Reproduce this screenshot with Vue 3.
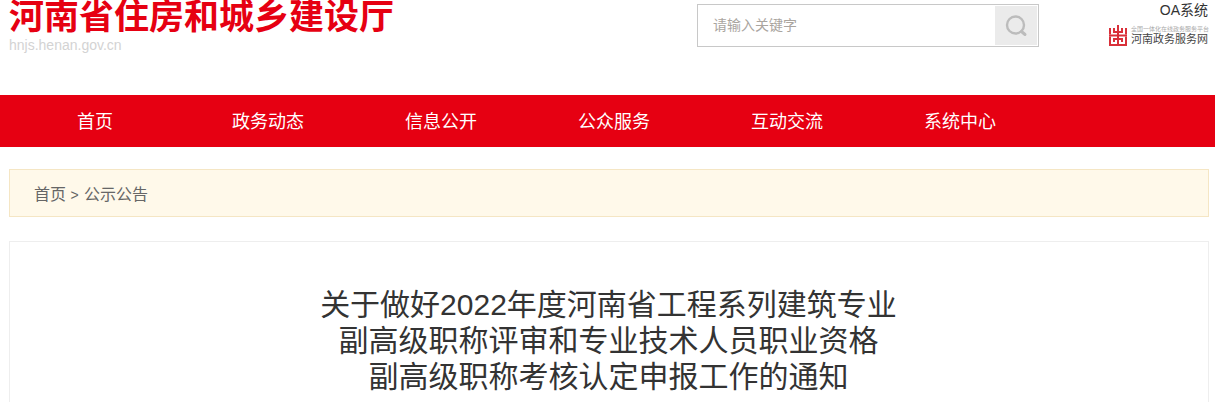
<template>
  <div class="page">
    <header class="header">
      <div class="brand">
        <h1 class="site-name">河南省住房和城乡建设厅</h1>
        <div class="site-url">hnjs.henan.gov.cn</div>
      </div>
      <div class="search">
        <span class="search-hint">请输入关键字</span>
        <button class="search-btn">
          <svg width="24" height="24" viewBox="0 0 24 24" fill="none" stroke="#bcbcbc">
            <circle cx="11.500" cy="11" r="8.500" stroke-width="2.400" />
            <path d="M17.500 17.500l3.500 3" stroke-width="3" stroke-linecap="round" />
          </svg>
        </button>
      </div>
      <div class="links">
        <a class="oa">OA系统</a>
        <div class="gov">
          <svg class="gov-logo" width="18" height="21" viewBox="0 0 18 21" fill="#d9303a">
            <path d="M8 0h2v21H8z" />
            <path d="M0 9.500h18v2H0z" />
            <path d="M0 3h2v6.500H0zM16 3h2v6.500h-2zM4 3h2v3h2v2H4zM12 3h2v5h-4V6h2z" />
            <path d="M0 11.500h2V19h6v2H0zM16 11.500h2V21h-8v-2h6zM4 13h4v2H6v2H4zM10 13h4v4h-2v-2h-2z" />
          </svg>
          <div class="gov-text">
            <div class="gov-small">全国一体化在线政务服务平台</div>
            <div class="gov-big">河南政务服务网</div>
          </div>
        </div>
      </div>
    </header>

    <nav class="nav">
      <a v-for="item in navItems" :key="item" class="nav-item">{{ item }}</a>
    </nav>

    <div class="crumb">
      <a>首页</a> <span class="crumb-sep">&gt;</span> <a>公示公告</a>
    </div>

    <main class="article">
      <h2 class="title">
        关于做好2022年度河南省工程系列建筑专业<br />
        副高级职称评审和专业技术人员职业资格<br />
        副高级职称考核认定申报工作的通知
      </h2>
    </main>
  </div>
</template>

<script setup>
const navItems = ['首页', '政务动态', '信息公开', '公众服务', '互动交流', '系统中心']
</script>

<style>
html, body {
  margin: 0;
  background: #fff;
  overflow: hidden;
}
</style>

<style scoped>
.page {
  width: 1215px;
  height: 402px;
  overflow: hidden;
  font-family: "Liberation Sans", "Noto Sans CJK SC", sans-serif;
  color: #333;
}

.header {
  height: 95px;
  display: flex;
  align-items: flex-start;
  padding-left: 9px;
  box-sizing: border-box;
}

.brand {
  width: 688px;
  flex-shrink: 0;
}

.site-name {
  margin: -3px 0 0;
  font-size: 35px;
  line-height: 40px;
  font-weight: 700;
  color: #e60012;
  white-space: nowrap;
}

.site-url {
  margin-top: 1px;
  font-size: 14px;
  line-height: 15px;
  color: #d3d3d3;
}

.search {
  width: 342px;
  height: 43px;
  margin-top: 4px;
  box-sizing: border-box;
  border: 1px solid #c8c8c8;
  display: flex;
  align-items: center;
  justify-content: space-between;
  padding: 1px;
  flex-shrink: 0;
}

.search-hint {
  padding-left: 14px;
  padding-bottom: 4px;
  font-size: 14px;
  color: #aaa59f;
}

.search-btn {
  width: 42px;
  height: 39px;
  padding: 0;
  border: none;
  background: #ebebeb;
  display: flex;
  align-items: center;
  justify-content: center;
}

.links {
  margin-left: 71px;
  width: 99px;
  flex-shrink: 0;
  display: flex;
  flex-direction: column;
  align-items: flex-end;
}

.oa {
  font-size: 14px;
  line-height: 20px;
  color: #333;
  padding-right: 1px;
}

.gov {
  display: flex;
  align-items: center;
  gap: 4px;
  margin-top: 5px;
}

.gov-small {
  font-size: 6px;
  line-height: 7px;
  color: #aaa;
  white-space: nowrap;
}

.gov-big {
  font-size: 11px;
  line-height: 13px;
  color: #444;
  white-space: nowrap;
}

.nav {
  height: 52px;
  background: #e60012;
  display: flex;
  padding-left: 8.500px;
}

.nav-item {
  width: 173px;
  line-height: 54px;
  text-align: center;
  font-size: 18px;
  color: #fff;
}

.crumb {
  margin: 22px 6px 0 9px;
  height: 48px;
  box-sizing: border-box;
  padding-left: 24px;
  background: #fff9ea;
  border: 1px solid #f5e6c4;
  line-height: 49px;
  font-size: 16px;
  color: #666;
}

.crumb-sep {
  font-size: 14px;
  margin-right: 1px;
}

.article {
  margin: 24px 6px 0 9px;
  height: 300px;
  border: 1px solid #eee;
  box-sizing: border-box;
  padding-top: 45px;
}

.title {
  margin: 0;
  padding-right: 1px;
  text-align: center;
  font-size: 30px;
  line-height: 36px;
  font-weight: 400;
  color: #333;
}
</style>
